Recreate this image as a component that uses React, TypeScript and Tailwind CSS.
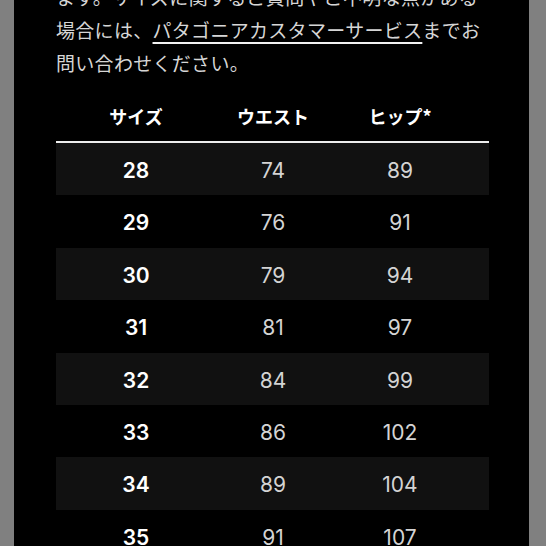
import React from 'react';

const rows: [string, string, string][] = [
  ['28', '74', '89'],
  ['29', '76', '91'],
  ['30', '79', '94'],
  ['31', '81', '97'],
  ['32', '84', '99'],
  ['33', '86', '102'],
  ['34', '89', '104'],
  ['35', '91', '107'],
];

const SizeChart: React.FC = () => {
  return (
    <div className="flex h-[546px] w-[546px] overflow-hidden bg-black font-['Noto_Sans_CJK_JP',sans-serif]">
      <div className="w-[14px] shrink-0 bg-[#808080]" />
      <div className="flex-1 pl-[42px] pr-[40px]">
        <div className="mt-[-20.5px] text-[19px] leading-[33px] tracking-[0.3px] text-[#d6d6d6] whitespace-nowrap">
          <div>ます。サイズに関するご質問やご不明な点がある</div>
          <div>
            場合には、
            <span className="underline decoration-2 underline-offset-[4px] decoration-[#f2f2f2]">
              パタゴニアカスタマーサービス
            </span>
            までお
          </div>
          <div>問い合わせください。</div>
        </div>

        <div className="mt-[12.5px]">
          <div className="grid h-[52px] grid-cols-[160px_114px_140px_1fr] items-center border-b-2 border-[#ededed] text-center text-[18px] font-bold text-white">
            <div>サイズ</div>
            <div>ウエスト</div>
            <div>ヒップ*</div>
            <div />
          </div>
          {rows.map(([size, waist, hip], i) => (
            <div
              key={size}
              className={
                "grid h-[52.4px] grid-cols-[160px_114px_140px_1fr] items-center pt-[3px] text-center font-['Inter',sans-serif] text-[21px] " +
                (i % 2 === 0 ? 'bg-[#111111]' : 'bg-black')
              }
            >
              <div className="font-semibold text-white">{size}</div>
              <div className="font-normal text-[#d4d4d4]">{waist}</div>
              <div className="font-normal text-[#d4d4d4]">{hip}</div>
              <div />
            </div>
          ))}
        </div>
      </div>
      <div className="w-[17px] shrink-0 bg-[#808080]" />
    </div>
  );
};

export default function App() {
  return <SizeChart />;
}
